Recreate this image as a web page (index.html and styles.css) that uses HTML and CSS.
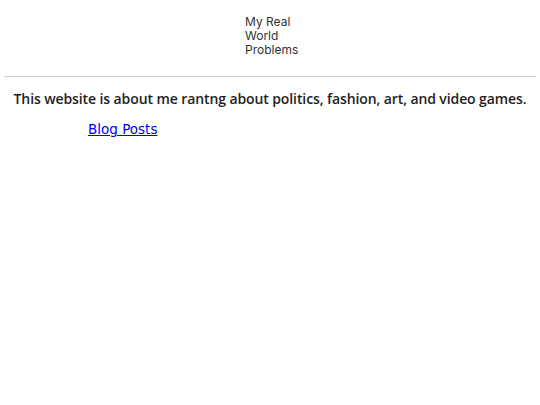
FILE: index.html
```html
<!DOCTYPE html>
<html>
<head>
<meta charset="utf-8">
<link rel="stylesheet" href="styles.css">
</head>
<body>
<header class="site-header">
  <div class="site-title">My Real World Problems</div>
</header>
<hr class="divider">
<p class="intro">This website is about me rantng about politics, fashion, art, and video games.</p>
<nav class="links">
  <a href="#" class="blog-link">Blog Posts</a>
</nav>
</body>
</html>
```
FILE: styles.css
```css
body {
  margin: 0 4px;
  background: #fff;
  color: #222;
}
.site-header {
  display: flex;
  justify-content: center;
  padding-top: 15px;
}
.site-title {
  width: 52px;
  margin-left: 2px;
  font-family: Inter, sans-serif;
  font-size: 12px;
  line-height: 14px;
  color: #333;
}
.divider {
  border: 0;
  border-top: 1px solid #c8c8c8;
  margin: 19px 0 0 0;
}
.intro {
  margin: 13px 0 0 0;
  text-align: center;
  white-space: nowrap;
  font-family: "Open Sans", sans-serif;
  font-weight: 600;
  font-size: 14px;
  letter-spacing: -0.1px;
  line-height: 18px;
  color: #1e1e1e;
}
.links {
  padding-left: 84px;
  margin-top: 12px;
}
.blog-link {
  font-family: "DejaVu Sans", sans-serif;
  font-size: 13.5px;
  color: #0000ee;
}
```
